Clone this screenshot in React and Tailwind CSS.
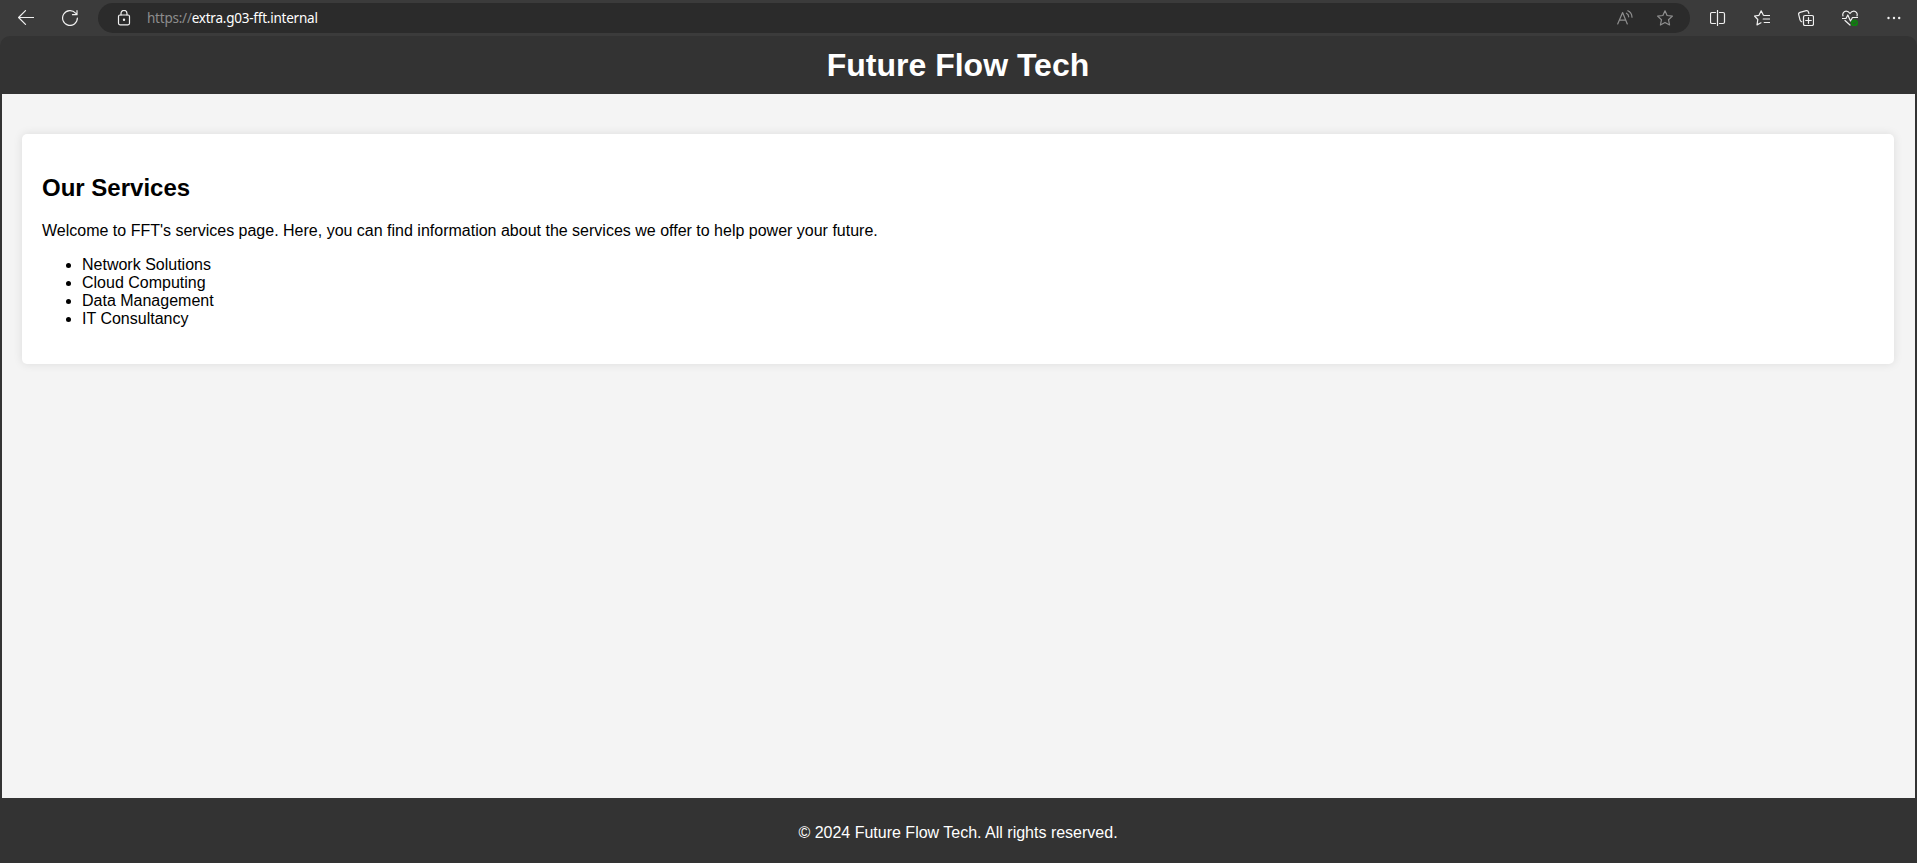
import React from "react";

function Icon({ children, className = "", w = 16 }) {
  return (
    <svg width={w} height="16" viewBox={`0 0 ${w} 16`} fill="none" stroke="currentColor" strokeWidth="1.2" strokeLinecap="round" strokeLinejoin="round" className={`shrink-0 ${className}`}>
      {children}
    </svg>
  );
}

const STAR = "M8 .8 10.1 5.5 15.4 6.1 11.5 9.7 12.6 15 8 12.4 3.4 15 4.5 9.7.6 6.1 5.9 5.5Z";

function Toolbar() {
  return (
    <div className="flex h-9 shrink-0 items-start bg-[#3b3b3b] pt-[3px] text-[#f0f0f0]">
      <div className="flex h-[30px] w-[98px] items-center gap-7 pl-[18px]">
        <Icon><path d="M15.6 7.5H.6M7.5.6.6 7.5l6.9 6.9" /></Icon>
        <Icon><path d="M15.4 8A7.4 7.4 0 1 1 13.6 3.2L15 4.7M15 .7v4h-4.5" /></Icon>
      </div>
      <div className="flex h-[30px] w-[1592px] items-center rounded-full bg-[#2b2b2b] pl-[18px] pr-[17px]">
        <Icon className="mr-[15px]">
          <rect x="2.5" y="5" width="11" height="9.8" rx="1.5" />
          <path d="M5 5V3.4a3 3 0 0 1 6 0V5" />
          <circle cx="8" cy="9.7" r=".6" fill="currentColor" />
        </Icon>
        <span className="whitespace-pre font-['Noto_Sans',sans-serif] text-[13.5px] leading-[18px] tracking-[-0.23px] text-white"><span className="text-[#8d8d8d]">https://</span>extra.g03-fft.internal</span>
        <div className="ml-auto flex gap-6 text-[#8f8f8f]">
          <Icon><path d="M.7 14 5.6 2.6 10.3 14M2.4 10.2h6.2M9.4 3.2c1.4.6 2.2 1.9 2.3 3.6M10.8.8c2.6 1 4 3.2 4.2 6.4" /></Icon>
          <Icon><path d={STAR} /></Icon>
        </div>
      </div>
      <div className="flex h-[30px] items-center gap-7 pl-5">
        <Icon><path d="M5.5 2.5H2A1.5 1.5 0 0 0 .5 4v8A1.5 1.5 0 0 0 2 13.5h3.5M9.5 2.5H13A1.5 1.5 0 0 1 14.5 4v8a1.5 1.5 0 0 1-1.5 1.5H9.5M7.5.5v15" /></Icon>
        <Icon><path d="M9.4 5.2 7.2.8 5 5.3.5 6l3.3 3.5L3 14.9l4-2.1M10.2 5.5h5.3M9.2 9h6.3M10.2 12.5h5.3" /></Icon>
        <Icon>
          <path d="M3.8 11.8C2.7 11.4 2.3 10.8 2 9.8L.7 4.6C.4 3.5.9 2.7 2 2.4L8.3.7c1-.2 1.8.2 2.1 1.2l.5 1.6" />
          <rect x="5.5" y="5.5" width="10" height="10" rx="1.6" />
          <path d="M10.5 7.7v5.6M7.7 10.5h5.6" />
        </Icon>
        <Icon>
          <path d="M1 6C.1 3.2 2 1.2 4.2 1.2 6 1.2 7 2 8 3.5c1-1.5 2-2.3 3.8-2.3C14 1.2 15.9 3.2 15 6M.5 8.5H4L5.8 5l2.7 6 2-3.5h5M3 10.5 8 15" />
          <circle cx="12.5" cy="13" r="3.6" fill="#107c10" stroke="none" />
          <path d="m11.2 13.1 1 1 1.8-2" stroke="#3b3b3b" strokeWidth=".9" />
        </Icon>
        <Icon>
          <g fill="currentColor" stroke="none"><circle cx="2.5" cy="8" r="1.2" /><circle cx="8" cy="8" r="1.2" /><circle cx="13.2" cy="8" r="1.2" /></g>
        </Icon>
      </div>
    </div>
  );
}

const services = ["Network Solutions", "Cloud Computing", "Data Management", "IT Consultancy"];

export default function App() {
  return (
    <div className="flex h-[863px] w-[1917px] flex-col overflow-hidden bg-[#3b3b3b] font-['Liberation_Sans',Arial,sans-serif] text-base leading-[18px] text-black">
      <Toolbar />
      <div className="flex grow flex-col rounded-t-[10px] bg-[#333333] px-0.5">
        <header className="pt-[11px] pr-px pb-2.5 text-center text-white">
          <h1 className="text-[32px] leading-[37px] font-bold">Future Flow Tech</h1>
        </header>
        <main className="grow bg-[#f4f4f4] px-5 pt-10">
          <section className="mr-px h-[230px] rounded-[5px] bg-white px-5 pt-10 shadow-[0_0_10px_rgba(0,0,0,0.1)]">
            <h2 className="text-2xl leading-[28px] font-bold">Our Services</h2>
            <p className="mt-5">Welcome to FFT's services page. Here, you can find information about the services we offer to help power your future.</p>
            <ul className="mt-4 list-disc pl-10">
              {services.map((s) => <li key={s}>{s}</li>)}
            </ul>
          </section>
        </main>
        <footer className="h-[65px] pt-[26px] pr-px text-center text-white">
          <p>© 2024 Future Flow Tech. All rights reserved.</p>
        </footer>
      </div>
    </div>
  );
}
